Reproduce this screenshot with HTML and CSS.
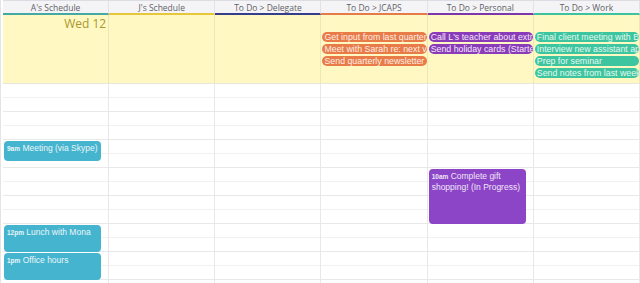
FILE: index.html
```html
<!DOCTYPE html>
<html lang="en">
<head>
  <meta charset="UTF-8">
  <title>Calendar - Wed 12</title>
  <link rel="stylesheet" href="styles.css">
</head>
<body>
  <div class="calendar">
    <!-- Column headers -->
    <div class="cal-row head-row">
      <div class="col-head bar-a">A's Schedule</div>
      <div class="col-head bar-j">J's Schedule</div>
      <div class="col-head bar-delegate">To Do &gt; Delegate</div>
      <div class="col-head bar-jcaps">To Do &gt; JCAPS</div>
      <div class="col-head bar-personal">To Do &gt; Personal</div>
      <div class="col-head bar-work">To Do &gt; Work</div>
    </div>

    <!-- All-day tasks -->
    <div class="cal-row allday-row">
      <div class="allday-cell">
        <div class="day-num">Wed 12</div>
      </div>
      <div class="allday-cell"><div class="day-num"></div></div>
      <div class="allday-cell"><div class="day-num"></div></div>
      <div class="allday-cell">
        <div class="day-num"></div>
        <div class="pill pill-jcaps">Get input from last quarter event</div>
        <div class="pill pill-jcaps">Meet with Sarah re: next volunteer drive</div>
        <div class="pill pill-jcaps">Send quarterly newsletter</div>
      </div>
      <div class="allday-cell">
        <div class="day-num"></div>
        <div class="pill pill-personal">Call L's teacher about extra credit</div>
        <div class="pill pill-personal">Send holiday cards (Started)</div>
      </div>
      <div class="allday-cell">
        <div class="day-num"></div>
        <div class="pill pill-work">Final client meeting with BnB</div>
        <div class="pill pill-work">Interview new assistant applicants</div>
        <div class="pill pill-work">Prep for seminar</div>
        <div class="pill pill-work">Send notes from last week's call</div>
      </div>
    </div>

    <!-- Timed events, one row = 15 minutes starting at 7am -->
    <div class="cal-row time-row">
      <div class="day-col">
        <div class="event ev-blue at-9 len-45">
          <span class="ev-time">9am</span> Meeting (via Skype)
        </div>
        <div class="event ev-blue at-12 len-60">
          <span class="ev-time">12pm</span> Lunch with Mona
        </div>
        <div class="event ev-blue at-13 len-60">
          <span class="ev-time">1pm</span> Office hours
        </div>
      </div>
      <div class="day-col"></div>
      <div class="day-col"></div>
      <div class="day-col"></div>
      <div class="day-col">
        <div class="event ev-purple at-10 len-120">
          <span class="ev-time">10am</span> Complete gift shopping! (In Progress)
        </div>
      </div>
      <div class="day-col"></div>
    </div>
  </div>
</body>
</html>
```

FILE: styles.css
```css
/* Base */
html, body {
  margin: 0;
  height: 100%;
  overflow: hidden;
  background: #ffffff;
}
body {
  font-family: 'Liberation Sans', Arial, sans-serif;
  color: #333333;
}

/* Calendar shell */
.calendar {
  padding-left: 2px;
  border-left: 1px solid #e4e4e4;
}
.cal-row {
  display: grid;
  grid-template-columns: repeat(6, 1fr);
}

/* Header */
.head-row {
  background: #f4f4f7;
  border-top: 1px solid #dcdce2;
}
.col-head {
  height: 12px;
  line-height: 13px;
  font-family: 'Open Sans', Arial, sans-serif;
  font-size: 8.5px;
  color: #5f5f66;
  text-align: center;
  border-right: 1px solid #e2e2e8;
  border-bottom: 2px solid #cccccc;
  white-space: nowrap;
  overflow: hidden;
}
.bar-a { border-bottom-color: #43a9a2; }
.bar-j { border-bottom-color: #e6c73c; }
.bar-delegate { border-bottom-color: #363e8c; }
.bar-jcaps { border-bottom-color: #e57b48; }
.bar-personal { border-bottom-color: #7d37ab; }
.bar-work { border-bottom-color: #3dc49e; }

/* All-day area */
.allday-row {
  background: #fff8c3;
  border-bottom: 1px solid #e8e6d6;
}
.allday-cell {
  height: 68px;
  display: flex;
  flex-direction: column;
  gap: 2px;
  padding: 0 0 0 1px;
  border-right: 1px solid #ece6b8;
  overflow: hidden;
}
.day-num {
  height: 14px;
  padding: 1px 2px 0 0;
  font-family: 'Open Sans', Arial, sans-serif;
  font-size: 12px;
  line-height: 16px;
  color: #a8972c;
  text-align: right;
  flex-shrink: 0;
}
.pill {
  height: 10px;
  line-height: 10px;
  font-size: 8.8px;
  padding: 0 2px;
  border-radius: 5px;
  color: #fbeee6;
  white-space: nowrap;
  overflow: hidden;
  flex-shrink: 0;
}
.pill-jcaps { background: #e97b48; }
.pill-personal { background: #8a3bb8; color: #f3e8f8; }
.pill-work { background: #3cc59f; color: #e6f8f1; }

/* Time grid */
.time-row {
  height: 200px;
}
.day-col {
  display: grid;
  grid-template-rows: repeat(29, 7px);
  padding: 0 7px 0 1px;
  border-right: 1px solid #e8e8e8;
  background:
    repeating-linear-gradient(to bottom,
      transparent 0, transparent 13px,
      #f1f1f1 13px, #f1f1f1 14px,
      transparent 14px, transparent 27px,
      #e8e8e8 27px, #e8e8e8 28px);
}

/* Events */
.event {
  grid-column: 1;
  border-radius: 4px;
  padding: 2px 3px;
  font-size: 8.5px;
  line-height: 10px;
  color: #eaf6fa;
  overflow: hidden;
  margin-top: 1px;
}
.ev-time {
  font-size: 6.5px;
  font-weight: bold;
}
.ev-blue { background: #45b4ce; }
.ev-purple { background: #8c45c7; color: #f1e6f8; }

/* start times (rows of 15 min from 7am) */
.at-9 { grid-row-start: 9; }
.at-10 { grid-row-start: 13; }
.at-12 { grid-row-start: 21; }
.at-13 { grid-row-start: 25; }
.len-45 { grid-row-end: span 3; }
.len-60 { grid-row-end: span 4; }
.len-120 { grid-row-end: span 8; }
```
